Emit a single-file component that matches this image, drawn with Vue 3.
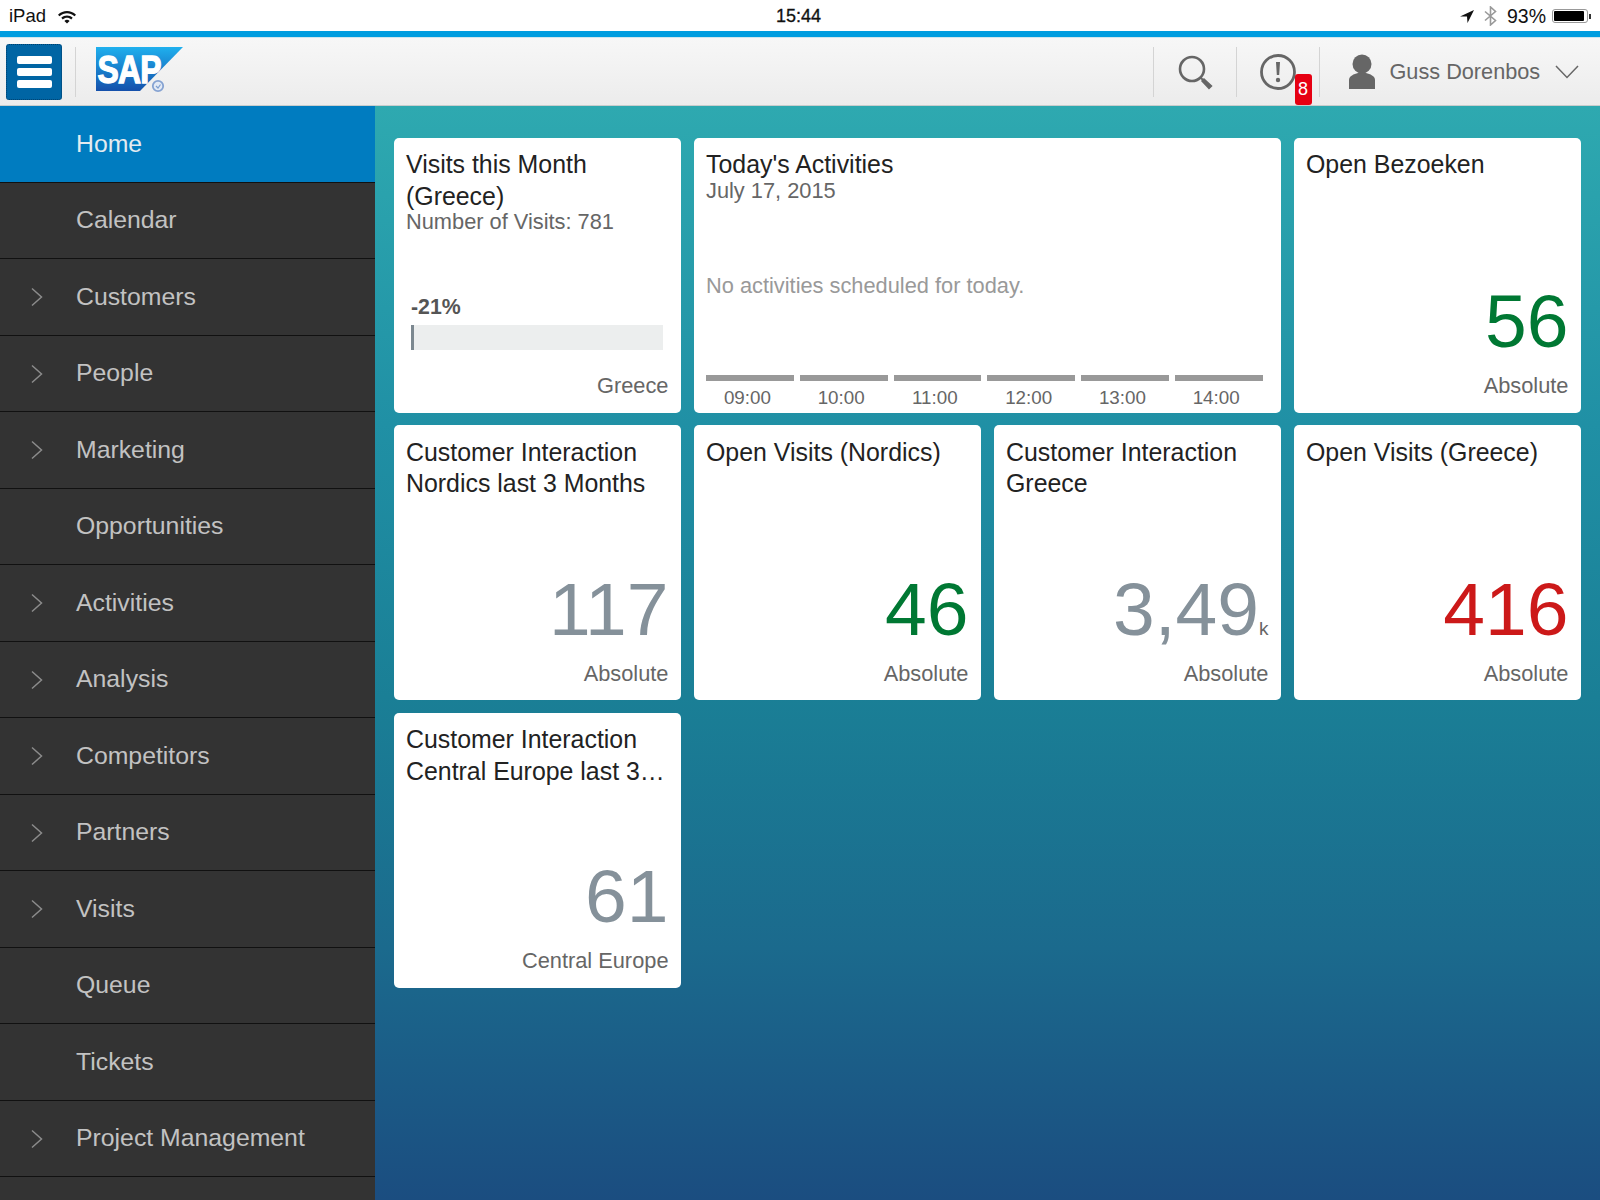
<template>
  <div class="page">
    <div class="statusbar">
      <div class="status-left">
        <span>iPad</span>
        <svg width="20" height="15" viewBox="0 0 20 14"><path d="M1 5.2 C6 .4 14 .4 19 5.2 L17.5 6.8 C13 2.8 7 2.8 2.5 6.8Z M4.3 8.3 C7.5 5.3 12.5 5.3 15.7 8.3 L14.2 9.9 C11.7 7.8 8.3 7.8 5.8 9.9Z M7.4 11.4 C9 10 11 10 12.6 11.4 L10 14Z" fill="#111"/></svg>
      </div>
      <div class="status-time">15:44</div>
      <div class="status-right">
        <svg width="14" height="14" viewBox="0 0 14 14"><path d="M14 1 L0 7.5 L7 7.5 L7.5 14Z" fill="#111"/></svg>
        <svg class="bt" width="13" height="20" viewBox="0 0 13 20"><path d="M1 5.5 L11.5 14.5 L6.5 19 L6.5 1 L11.5 5.5 L1 14.5" fill="none" stroke="#999" stroke-width="1.6"/></svg>
        <span class="pct">93%</span>
        <div class="battery"><div class="battery-fill"></div></div>
      </div>
    </div>
    <div class="bluebar"></div>
    <header class="header">
      <div class="menubtn"><span></span><span></span><span></span></div>
      <div class="sep first"></div>
      <div class="logo">
        <svg width="90" height="46" viewBox="0 0 90 46">
          <defs>
            <linearGradient id="sapg" x1="0" y1="0" x2="0" y2="1">
              <stop offset="0" stop-color="#1fb0ee"/>
              <stop offset="1" stop-color="#1450ab"/>
            </linearGradient>
          </defs>
          <path d="M1 0 L88 0 L45 44 L1 44Z" fill="url(#sapg)"/>
          <text transform="translate(2.5 36) scale(0.84 1)" class="sap-text">SAP</text>
          <circle cx="63" cy="39" r="5.2" fill="#e3eaf5" stroke="#86a3d2" stroke-width="1.8"/>
          <path d="M61 39 L63 41 L65.5 37.5" fill="none" stroke="#7d9fd0" stroke-width="1.2"/>
        </svg>
      </div>
      <div class="spacer"></div>
      <div class="sep"></div>
      <div class="tool search">
        <svg width="38" height="38" viewBox="0 0 38 38"><circle cx="16" cy="16" r="12" fill="none" stroke="#666" stroke-width="2.6"/><path d="M24.5 24.5 L27 27" stroke="#666" stroke-width="2"/><path d="M26 28 L28 26 L35.5 33 L33 35.5Z" fill="#666" stroke="#666" stroke-width="1.5"/></svg>
      </div>
      <div class="sep"></div>
      <div class="tool alert">
        <svg width="38" height="38" viewBox="0 0 38 38"><circle cx="19" cy="19" r="16.5" fill="none" stroke="#666" stroke-width="2.8"/><path d="M17 9 L21 9 L20.2 22 L17.8 22Z" fill="#666"/><circle cx="19" cy="27" r="2.2" fill="#666"/></svg>
        <span class="badge">8</span>
      </div>
      <div class="sep"></div>
      <div class="user">
        <svg width="28" height="36" viewBox="0 0 28 36"><circle cx="14" cy="10" r="9.5" fill="#666"/><path d="M1 35 L1 26 C1 22 6 20 10 19 L18 19 C22 20 27 22 27 26 L27 35Z" fill="#666"/></svg>
        <span class="username">Guss Dorenbos</span>
        <svg width="24" height="14" viewBox="0 0 24 14"><path d="M1 1 L12 12.5 L23 1" fill="none" stroke="#666" stroke-width="1.5"/></svg>
      </div>
    </header>
    <div class="body">
      <nav class="sidebar">
        <div v-for="item in navItems" :key="item.label" class="navitem" :class="{ active: item.active }">
          <svg v-if="item.sub" class="chev" width="12" height="20" viewBox="0 0 12 20"><path d="M1 1.5 L10.5 10 L1 18.5" fill="none" stroke="#8c8c8c" stroke-width="1.5"/></svg>
          <span class="navlabel">{{ item.label }}</span>
        </div>
      </nav>
      <main class="content">
        <div class="card">
          <div class="title">Visits this Month (Greece)</div>
          <div class="subtitle">Number of Visits: 781</div>
          <div class="comparison">
            <div class="pctlabel">-21%</div>
            <div class="track"><div class="trackfill"></div></div>
          </div>
          <div class="footer">Greece</div>
        </div>
        <div class="card wide">
          <div class="title">Today's Activities</div>
          <div class="subtitle">July 17, 2015</div>
          <div class="noact">No activities scheduled for today.</div>
          <div class="hours">
            <div v-for="h in hours" :key="h" class="hour">
              <div class="hourbar"></div>
              <div class="hourlabel">{{ h }}</div>
            </div>
          </div>
        </div>
        <div v-for="t in tiles" :key="t.title" class="card">
          <div class="title clamp">{{ t.title }}</div>
          <div class="number" :class="t.color">{{ t.value }}<span v-if="t.unit" class="unit">{{ t.unit }}</span></div>
          <div class="footer nomargin">{{ t.footer }}</div>
        </div>
      </main>
    </div>
  </div>
</template>

<script setup>
const navItems = [
  { label: 'Home', active: true },
  { label: 'Calendar' },
  { label: 'Customers', sub: true },
  { label: 'People', sub: true },
  { label: 'Marketing', sub: true },
  { label: 'Opportunities' },
  { label: 'Activities', sub: true },
  { label: 'Analysis', sub: true },
  { label: 'Competitors', sub: true },
  { label: 'Partners', sub: true },
  { label: 'Visits', sub: true },
  { label: 'Queue' },
  { label: 'Tickets' },
  { label: 'Project Management', sub: true }
]

const hours = ['09:00', '10:00', '11:00', '12:00', '13:00', '14:00']

const tiles = [
  { title: 'Open Bezoeken', value: '56', color: 'green', footer: 'Absolute' },
  { title: 'Customer Interaction Nordics last 3 Months', value: '117', color: 'grey', footer: 'Absolute' },
  { title: 'Open Visits (Nordics)', value: '46', color: 'green', footer: 'Absolute' },
  { title: 'Customer Interaction Greece', value: '3,49', unit: 'k', color: 'grey', footer: 'Absolute' },
  { title: 'Open Visits (Greece)', value: '416', color: 'red', footer: 'Absolute' },
  { title: 'Customer Interaction Central Europe last 3 Months', value: '61', color: 'grey', footer: 'Central Europe' }
]
</script>

<style>
html, body {
  margin: 0;
  padding: 0;
  overflow: hidden;
}
</style>

<style scoped>
.page {
  width: 1600px;
  height: 1200px;
  display: flex;
  flex-direction: column;
  overflow: hidden;
  font-family: "Liberation Sans", Arial, sans-serif;
}

.statusbar {
  height: 31px;
  box-sizing: border-box;
  background: #fff;
  display: grid;
  grid-template-columns: 1fr auto 1fr;
  align-items: center;
  padding: 1px 12px 0 9px;
  font-size: 18.5px;
  color: #111;
}

.status-left {
  display: flex;
  align-items: center;
  gap: 11px;
}

.status-time {
  font-size: 18px;
  -webkit-text-stroke: 0.3px #111;
}

.status-right {
  display: flex;
  justify-content: flex-end;
  align-items: center;
  gap: 10px;
}

.pct {
  font-size: 19.5px;
  margin-right: -4px;
}

.battery {
  width: 36px;
  height: 14px;
  border: 1px solid #999;
  border-radius: 3px;
  padding: 1px;
  box-sizing: border-box;
  position: relative;
}

.battery::after {
  content: "";
  position: absolute;
  right: -4px;
  top: 4px;
  width: 2px;
  height: 5px;
  background: #333;
}

.battery-fill {
  width: 93%;
  height: 100%;
  background: #000;
  border-radius: 1px;
}

.bluebar {
  height: 6px;
  background: #009de0;
  border-bottom: 1px solid #cfe6ef;
}

.header {
  height: 68px;
  display: flex;
  align-items: center;
  background: linear-gradient(#f7f7f7, #ececec);
  border-bottom: 1px solid #c8cdcd;
  box-sizing: border-box;
  padding-left: 6px;
}

.menubtn {
  width: 56px;
  height: 56px;
  box-sizing: border-box;
  background: #0065a4;
  border: 1px dotted #003f6b;
  border-radius: 3px;
  display: flex;
  flex-direction: column;
  align-items: center;
  justify-content: center;
  gap: 4px;
}

.menubtn span {
  width: 35px;
  height: 8px;
  border-radius: 2px;
  background: #fff;
}

.sep {
  width: 1px;
  height: 50px;
  background: #d4d4d4;
}

.sep.first {
  margin-left: 13px;
}

.logo {
  margin-left: 19px;
  display: flex;
  height: 46px;
  margin-top: -4px;
}

.sap-text {
  font-family: "Liberation Sans", Arial, sans-serif;
  font-size: 38px;
  font-weight: 700;
  fill: #fff;
  stroke: #fff;
  stroke-width: 1.3px;
  letter-spacing: -1px;
}

.spacer {
  flex: 1;
}

.tool {
  width: 82px;
  display: flex;
  justify-content: center;
  position: relative;
}

.badge {
  position: absolute;
  left: 58px;
  top: 21px;
  width: 17px;
  height: 31px;
  background: #e60012;
  border-radius: 3px;
  color: #fff;
  font-size: 18px;
  display: flex;
  align-items: center;
  justify-content: center;
}

.user {
  width: 280.5px;
  box-sizing: border-box;
  display: flex;
  align-items: center;
  padding-left: 28px;
  color: #666;
}

.username {
  font-size: 21.7px;
  margin-left: 14px;
  margin-right: 15px;
}

.body {
  flex: 1;
  display: flex;
  min-height: 0;
}

.sidebar {
  width: 375px;
  flex: none;
  background: #333;
  overflow: hidden;
}

.navitem {
  height: 76.5px;
  box-sizing: border-box;
  display: flex;
  align-items: center;
  border-bottom: 1px solid #111;
  position: relative;
  padding-left: 76px;
  color: #c2c2c2;
  font-size: 24.8px;
}

.navitem.active {
  background: #007cc0;
  color: #e4ebf0;
}

.chev {
  position: absolute;
  left: 31px;
  top: 28px;
}

.content {
  flex: 1;
  background: linear-gradient(#2ea9b0 0%, #2090a5 29%, #1a7f96 54%, #1b6a8d 77%, #1b4d80 100%);
  padding: 31.5px 18.5px 0;
  display: grid;
  grid-template-columns: repeat(4, 287.5px);
  grid-auto-rows: 275px;
  gap: 12.5px;
  align-content: start;
}

.card {
  background: #fff;
  border-radius: 5px;
  padding: 11.5px 12.5px 14.5px;
  box-sizing: border-box;
  display: flex;
  flex-direction: column;
  min-width: 0;
  overflow: hidden;
}

.card.wide {
  grid-column: span 2;
}

.title {
  font-size: 24.9px;
  line-height: 31.5px;
  color: #222;
}

.clamp {
  display: -webkit-box;
  -webkit-line-clamp: 2;
  -webkit-box-orient: vertical;
  overflow: hidden;
  height: 63px;
  flex: none;
}

.subtitle {
  font-size: 21.8px;
  line-height: 24px;
  color: #666;
  margin-top: -2px;
}

.comparison {
  margin-top: auto;
  padding: 0 5px;
}

.pctlabel {
  font-size: 21.3px;
  font-weight: 700;
  color: #555;
  line-height: 24px;
  margin-bottom: 6px;
}

.track {
  height: 25px;
  width: 252px;
  background: #eceeee;
}

.trackfill {
  width: 3px;
  height: 100%;
  background: #7c8890;
}

.footer {
  font-size: 21.8px;
  line-height: 24px;
  color: #666;
  text-align: right;
  margin-top: 24px;
}

.footer.nomargin {
  margin-top: 13px;
}

.noact {
  font-size: 21.8px;
  color: #999;
  margin-top: 71.5px;
  line-height: 24px;
}

.hours {
  margin-top: auto;
  display: flex;
  gap: 6px;
  margin-bottom: -12px;
  padding-right: 6px;
}

.hour {
  flex: 1;
}

.hourbar {
  height: 6px;
  background: #999;
}

.hourlabel {
  font-size: 18.8px;
  line-height: 24px;
  color: #666;
  text-align: center;
  margin-top: 5px;
  padding-right: 5px;
}

.number {
  margin-top: auto;
  font-size: 75px;
  line-height: 80px;
  text-align: right;
}

.unit {
  font-size: 19px;
  line-height: 1;
  color: #666;
}

.green {
  color: #007833;
}

.grey {
  color: #85919a;
}

.red {
  color: #cc1919;
}
</style>
